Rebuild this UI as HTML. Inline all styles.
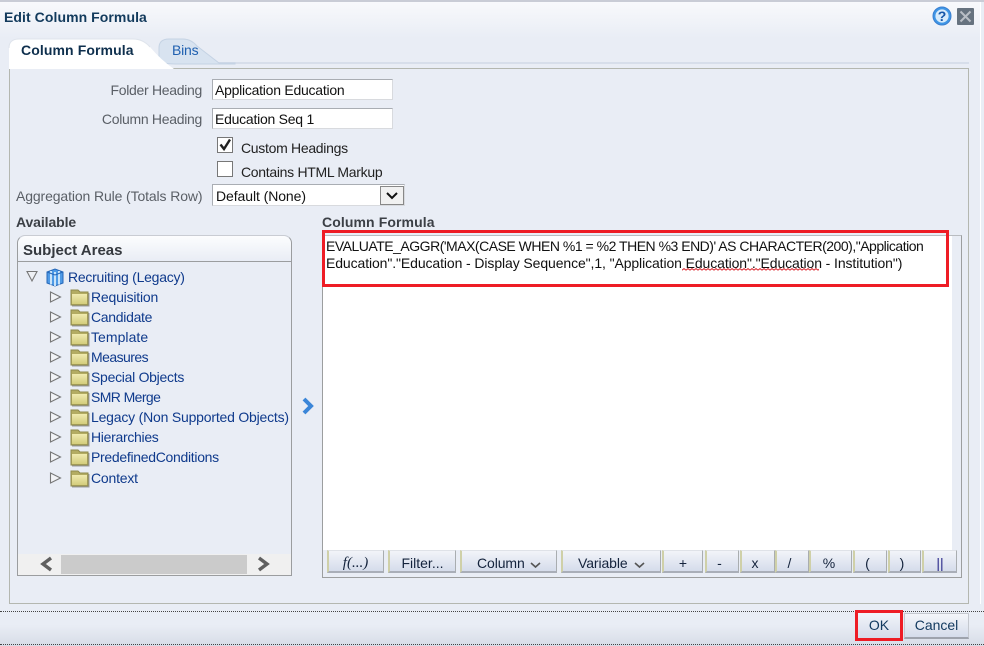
<!DOCTYPE html>
<html><head><meta charset="utf-8"><style>
html,body{margin:0;padding:0}
body{width:984px;height:646px;position:relative;overflow:hidden;background:#e9edf5;font-family:"Liberation Sans",sans-serif;font-size:14px;color:#111}
div,span.t{position:absolute;white-space:nowrap;box-sizing:border-box}
.lbl{color:#5a5f66;line-height:18px;text-align:right}
.inp{background:#fff;border:1px solid #d8dade;border-top-color:#a9adb3;border-left-color:#a9adb3;line-height:20px;padding-left:2px;color:#111}
.tree{color:#0f3a8c;line-height:18px;left:91px}
.btn{top:550px;height:23px;background:linear-gradient(#f2f4f9,#d5dceb);border-right:1px solid #a9adb0;border-bottom:2px solid #a9aeb8;border-left:2px solid #cfd0a8;border-top:1px solid #dfe2e8;text-align:center;line-height:24px;color:#14233c}
svg{position:absolute;overflow:visible}
</style></head><body>
<div style="left:0;top:0;width:984px;height:2px;background:#c9ccd6"></div>
<div style="left:0;top:2px;width:981px;height:36px;background:linear-gradient(#f8f9fc,#e9edf5)"></div>
<div style="left:980px;top:2px;width:1px;height:608px;background:#fff"></div>
<div style="left:4px;top:8px;font-weight:bold;font-size:14px;line-height:18px;color:#123a5c;letter-spacing:.07px">Edit Column Formula</div>
<svg style="left:932px;top:6px" width="20" height="20" viewBox="0 0 20 20"><circle cx="10" cy="10" r="9" fill="#3f96e6" stroke="#3a7fd0"/><circle cx="10" cy="10" r="6.6" fill="#d8ebfb"/><text x="10" y="15" font-family="Liberation Sans" font-weight="bold" font-size="14" text-anchor="middle" fill="#1556a8">?</text></svg>
<svg style="left:957px;top:8px" width="17" height="17" viewBox="0 0 17 17"><rect width="17" height="17" rx="1" fill="#66727f"/><path d="M3.5 3.5L13.5 13.5M13.5 3.5L3.5 13.5" stroke="#b9bec6" stroke-width="2"/></svg>

<div style="left:9px;top:62px;width:960px;height:2px;background:#d7deea"></div>
<svg style="left:155px;top:38px" width="80" height="30" viewBox="0 0 80 30"><path d="M4 24V10Q4 1 14 1H28Q36 1 42 8L64 25H80V26H24Q10 26 4 24Z" fill="#d8e3f0" stroke="#c5d3e4"/></svg>
<div style="left:172px;top:41px;line-height:18px;color:#1f60b0;letter-spacing:-.2px">Bins</div>
<div style="left:9px;top:68px;width:960px;height:536px;border:1px solid #b4b7b0;background:#e9edf5"></div>
<svg style="left:9px;top:38px" width="160" height="31" viewBox="0 0 160 31"><path d="M0 31V10Q0 1 10 1H124Q134 1 141 9Q152 22 165 31Z" fill="#fff"/><path d="M0 10Q0 1 10 1H124Q134 1 141 9" fill="none" stroke="#dfe4ec"/></svg>
<div style="left:21px;top:41px;font-weight:bold;line-height:18px;color:#0e2f4d;letter-spacing:.1px">Column Formula</div>

<div class="lbl" style="left:60px;width:142px;top:81px;letter-spacing:-.3px">Folder Heading</div>
<div class="lbl" style="left:60px;width:142px;top:110px;letter-spacing:-.3px">Column Heading</div>
<div class="inp" style="left:212px;top:79px;width:181px;height:21px;letter-spacing:-.25px">Application Education</div>
<div class="inp" style="left:212px;top:108px;width:181px;height:21px;letter-spacing:-.25px">Education Seq 1</div>
<div style="left:217px;top:137px;width:16px;height:16px;background:#fff;border:1px solid #777"></div>
<svg style="left:218px;top:137px" width="15" height="15" viewBox="0 0 15 15"><path d="M2.5 7.5L6 12L12 2.5" fill="none" stroke="#222" stroke-width="2.4"/></svg>
<div style="left:241px;top:139px;line-height:18px;color:#222;letter-spacing:-.3px">Custom Headings</div>
<div style="left:217px;top:161px;width:16px;height:16px;background:#fff;border:1px solid #777"></div>
<div style="left:241px;top:163px;line-height:18px;color:#222;letter-spacing:-.3px">Contains HTML Markup</div>
<div class="lbl" style="left:16px;top:187px;letter-spacing:-.12px">Aggregation Rule (Totals Row)</div>
<div class="inp" style="left:212px;top:184px;width:193px;height:22px;letter-spacing:-.08px;padding-left:3px;line-height:23px">Default (None)</div>
<div style="left:380px;top:186px;width:24px;height:19px;background:#f1f1f1;border:1px solid #888"></div>
<svg style="left:380px;top:186px" width="24" height="19"><path d="M7 7L12 12L17 7" fill="none" stroke="#111" stroke-width="2"/></svg>

<div style="left:16px;top:213px;font-weight:bold;line-height:18px;color:#3c4046;letter-spacing:-.1px">Available</div>
<div style="left:322px;top:213px;font-weight:bold;line-height:18px;color:#3c4046;letter-spacing:.1px">Column Formula</div>

<div style="left:17px;top:235px;width:275px;height:341px;border:1px solid #9b9d9f;border-top-color:#c9ccd3;border-radius:8px 8px 0 0;background:#e9edf5"></div>
<div style="left:18px;top:236px;width:273px;height:25px;background:linear-gradient(#fcfdfe,#e9edf5);border-radius:8px 8px 0 0"></div>
<div style="left:18px;top:261px;width:273px;height:1px;background:#9b9d9f"></div>
<div style="left:23px;top:241px;font-weight:bold;font-size:15px;line-height:20px;color:#35393f">Subject Areas</div>

<svg style="left:26px;top:270px" width="12" height="12"><path d="M1 1.5H11L6 11Z" fill="#eef0f4" stroke="#777" stroke-width="1.1"/></svg>
<svg style="left:45px;top:267px" width="20" height="20" viewBox="0 0 20 20"><path d="M2 5L10 2L18 5V16L10 19L2 16Z" fill="#4e9ae6" stroke="#2567b8"/><path d="M6 4V17.5M10 5V19M14 4V17.5" stroke="#d7ebfb" stroke-width="1.8"/><path d="M2 5L10 8L18 5" fill="none" stroke="#2567b8"/></svg>
<div class="tree" style="left:68px;top:268px;letter-spacing:-.25px">Recruiting (Legacy)</div>

<div class="tree" style="top:288px;letter-spacing:-.2px">Requisition</div>
<div class="tree" style="top:308px;letter-spacing:-.3px">Candidate</div>
<div class="tree" style="top:328px;letter-spacing:.05px">Template</div>
<div class="tree" style="top:348px;letter-spacing:-.55px">Measures</div>
<div class="tree" style="top:368px;letter-spacing:-.28px">Special Objects</div>
<div class="tree" style="top:388px;letter-spacing:-.6px">SMR Merge</div>
<div class="tree" style="top:408px;letter-spacing:-.2px">Legacy (Non Supported Objects)</div>
<div class="tree" style="top:428px;letter-spacing:-.3px">Hierarchies</div>
<div class="tree" style="top:448px;letter-spacing:-.3px">PredefinedConditions</div>
<div class="tree" style="top:469px;letter-spacing:-.2px">Context</div>

<svg style="left:0;top:0" width="100" height="490">
<defs>
<linearGradient id="fg" x1="0" y1="0" x2="0" y2="1"><stop offset="0" stop-color="#f0ebb0"/><stop offset="1" stop-color="#d3cc7c"/></linearGradient>
<g id="a"><path d="M50.5 -5V5L60.5 0Z" fill="#f2f3f6" stroke="#777" stroke-width="1.1"/><path d="M71 -7H78L80 -5H88V8H71Z" fill="#b3ac62" stroke="#8f8a4c" stroke-width="1"/><rect x="72" y="-3" width="15" height="10" fill="url(#fg)"/><path d="M72 9H89V-4" fill="none" stroke="#9a9aa0" stroke-width="1"/></g>
</defs>
<use href="#a" y="297"/><use href="#a" y="317"/><use href="#a" y="337"/><use href="#a" y="357"/><use href="#a" y="377"/><use href="#a" y="397"/><use href="#a" y="417"/><use href="#a" y="437"/><use href="#a" y="457"/><use href="#a" y="478"/>
</svg>

<div style="left:18px;top:554px;width:273px;height:21px;background:#f0f0f0"></div>
<div style="left:61px;top:555px;width:186px;height:19px;background:#cbcbcb"></div>
<svg style="left:38px;top:556px" width="240" height="16"><path d="M13 2L5 8L13 14" fill="none" stroke="#5f5f5f" stroke-width="3.4"/><path d="M221 2L229 8L221 14" fill="none" stroke="#5f5f5f" stroke-width="3.4"/></svg>

<svg style="left:301px;top:397px" width="14" height="18" viewBox="0 0 14 18"><path d="M3 2L10 9L3 16" fill="none" stroke="#3b86d8" stroke-width="4"/></svg>

<div style="left:322px;top:235px;width:640px;height:343px;border:1px solid #9c9e9f;border-top-color:#b9bcc0;background:#e9edf5"></div>
<div style="left:323px;top:236px;width:629px;height:314px;background:#fff"></div>
<div style="left:323px;top:550px;width:634px;height:27px;background:#e9edf5"></div>
<div style="left:326px;top:237px;line-height:18px;letter-spacing:-.49px;color:#111">EVALUATE_AGGR('MAX(CASE WHEN %1 = %2 THEN %3 END)' AS CHARACTER(200),"Application</div>
<div style="left:326px;top:254px;line-height:18px;letter-spacing:-.1px;color:#111">Education"."Education - Display Sequence",1, "Application Education"."Education - Institution")</div>
<svg style="left:682px;top:268px" width="137" height="4"><defs><pattern id="sq" width="4" height="3" patternUnits="userSpaceOnUse"><path d="M0 2.2L2 .6L4 2.2" fill="none" stroke="#dc2a32" stroke-width="1"/></pattern></defs><rect width="137" height="3" fill="url(#sq)"/></svg>
<div style="left:322px;top:230px;width:627px;height:57px;border:3px solid #ee1c25"></div>

<div class="btn" style="left:327px;width:57px;font-style:italic;font-family:'Liberation Serif',serif;font-size:15px;padding-right:1px">f(...)</div>
<div class="btn" style="left:388px;width:68px">Filter...</div>
<div class="btn" style="left:460px;width:97px;text-align:left;padding-left:15px;letter-spacing:-.1px">Column</div>
<div class="btn" style="left:561px;width:100px;text-align:left;padding-left:15px;letter-spacing:-.1px">Variable</div>
<svg style="left:530px;top:560px" width="120" height="10"><path d="M1 3L5.5 7L10 3" fill="none" stroke="#555" stroke-width="1.6"/><path d="M105 3L109.5 7L114 3" fill="none" stroke="#555" stroke-width="1.6"/></svg>
<div class="btn" style="left:662px;width:41px">+</div>
<div class="btn" style="left:705px;width:34px;padding-right:6px">-</div>
<div class="btn" style="left:740px;width:35px;padding-right:6px">x</div>
<div class="btn" style="left:775px;width:34px;padding-right:6px">/</div>
<div class="btn" style="left:809px;width:43px;padding-right:4px">%</div>
<div class="btn" style="left:853px;width:34px;padding-right:6px">(</div>
<div class="btn" style="left:888px;width:33px;padding-right:6px">)</div>
<div class="btn" style="left:922px;width:35px;color:#2b2a8a">||</div>

<div style="left:0;top:604px;width:984px;height:42px;background:linear-gradient(#e9edf5 0,#e9edf5 50%,#d7dce7 100%)"></div>
<div style="left:0;top:611px;width:984px;height:1px;border-top:1px dotted #444"></div>
<div style="left:0;top:644px;width:984px;height:1px;border-top:1px dotted #444"></div>
<div style="left:858px;top:613px;width:42px;height:25px;background:linear-gradient(#f2f4f9,#d5dceb);text-align:center;line-height:24px;color:#12395f">OK</div>
<div style="left:855px;top:610px;width:48px;height:31px;border:3px solid #ee1c25"></div>
<div style="left:904px;top:613px;width:65px;height:26px;background:linear-gradient(#f4f6fa,#d5dceb);border:1px solid #c4c8cf;border-bottom:2px solid #9ea3ad;text-align:center;line-height:23px;color:#12395f">Cancel</div>
</body></html>
